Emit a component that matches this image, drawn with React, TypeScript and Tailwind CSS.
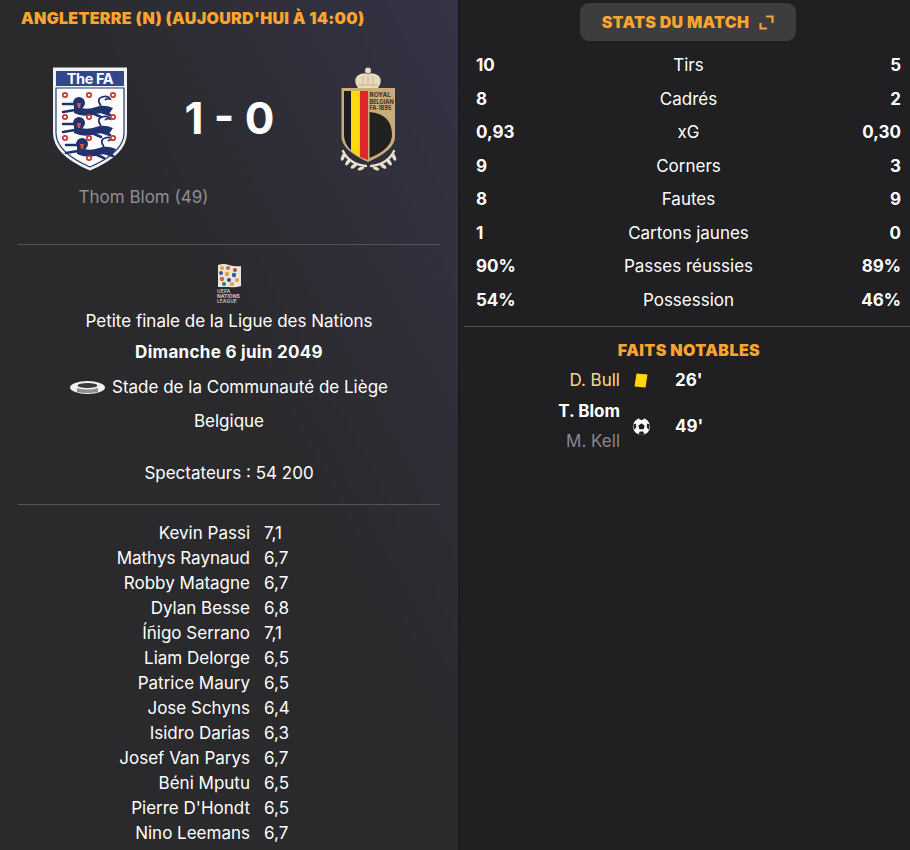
import React from 'react';

const stats = [
  { left: '10', label: 'Tirs', right: '5' },
  { left: '8', label: 'Cadrés', right: '2' },
  { left: '0,93', label: 'xG', right: '0,30' },
  { left: '9', label: 'Corners', right: '3' },
  { left: '8', label: 'Fautes', right: '9' },
  { left: '1', label: 'Cartons jaunes', right: '0' },
  { left: '90%', label: 'Passes réussies', right: '89%' },
  { left: '54%', label: 'Possession', right: '46%' },
];

const players = [
  ['Kevin Passi', '7,1'],
  ['Mathys Raynaud', '6,7'],
  ['Robby Matagne', '6,7'],
  ['Dylan Besse', '6,8'],
  ['Íñigo Serrano', '7,1'],
  ['Liam Delorge', '6,5'],
  ['Patrice Maury', '6,5'],
  ['Jose Schyns', '6,4'],
  ['Isidro Darias', '6,3'],
  ['Josef Van Parys', '6,7'],
  ['Béni Mputu', '6,5'],
  ["Pierre D'Hondt", '6,5'],
  ['Nino Leemans', '6,7'],
];

function Lion({ x, y }: { x: number; y: number }) {
  return (
    <g transform={`translate(${x} ${y})`}>
      <path d="M22 12 Q34 17 44 13 Q52 10 61 14 L57 20 Q47 18 40 21 Q30 23 22 19 Z" fill="#22326e" />
      <path d="M23 10 L11 10 M23 16 L11 18 M47 17 L58 21 M40 19 L49 23" stroke="#22326e" strokeWidth="2.6" strokeLinecap="round" fill="none" />
      <path d="M49 12 Q44 5 50 3 Q56 1 58 5 Q55 4 53 6" stroke="#22326e" strokeWidth="1.8" fill="none" />
      <circle cx="27" cy="9" r="6" fill="#22326e" />
      <path d="M25 9 h4 l-1 5 h-2 z" fill="#d9553a" />
    </g>
  );
}

function Rose({ x, y }: { x: number; y: number }) {
  return <circle cx={x} cy={y} r="2.2" fill="#fff" stroke="#c8352b" strokeWidth="1.7" />;
}

function FaCrest() {
  return (
    <svg width="76" height="104" viewBox="0 0 76 104" className="shrink-0">
      <path d="M1 0.5 H75 V66 Q75 88 38 103.5 Q1 88 1 66 Z" fill="#f2f2f2" />
      <rect x="4" y="4" width="68" height="15" fill="#32488a" />
      <text x="38" y="16.5" textAnchor="middle" fill="#fff" fontSize="14.5" fontWeight="700" letterSpacing="-0.4" fontFamily="Inter, sans-serif">The FA</text>
      <path d="M4 21 H72 V66 Q72 85 38 100 Q4 85 4 66 Z" fill="#fff" stroke="#233672" strokeWidth="1.2" />
      <Lion x={0} y={27} />
      <Lion x={0} y={47} />
      <Lion x={3} y={68} />
      <Rose x={13} y={28} />
      <Rose x={37} y={28} />
      <Rose x={61} y={28} />
      <Rose x={13} y={50} />
      <Rose x={37} y={50} />
      <Rose x={61} y={50} />
      <Rose x={13} y={71} />
      <Rose x={37} y={71} />
      <Rose x={61} y={71} />
      <Rose x={37} y={91} />
    </svg>
  );
}

function BelgiumCrest() {
  return (
    <svg width="58" height="104" viewBox="0 0 58 104" className="shrink-0">
      <circle cx="28" cy="3.5" r="3" fill="#e8dcc0" />
      <path d="M18 21 Q13 14 17 9 Q22 5 28 7 Q34 5 39 9 Q43 14 38 21 Z" fill="#e6d9bc" />
      <path d="M18 18 H38 M23 9 V18 M28 8 V18 M33 9 V18" stroke="#c0ac85" strokeWidth="0.8" fill="none" />
      <path d="M1.5 21 H55 V70 Q55 83 28 95 Q1.5 83 1.5 70 Z" fill="#c8ad78" />
      <path d="M4 24 H11 V83 Q4 77 4 68 Z" fill="#1c1c1c" />
      <path d="M11 24 H20 V90 Q14 87 11 83 Z" fill="#ffd90c" />
      <path d="M20 24 H28 V93 L20 90 Z" fill="#e0252b" />
      <path d="M29.5 45 Q52 47 52 68 Q52 82 29.5 91 Z" fill="#202020" />
      <text x="29.5" y="30" fontSize="6.4" fontWeight="700" fill="#3a2f1b" fontFamily="Inter, sans-serif">ROYAL</text>
      <text x="29.5" y="36.5" fontSize="5.6" fontWeight="700" fill="#3a2f1b" fontFamily="Inter, sans-serif">BELGIAN</text>
      <text x="29.5" y="43" fontSize="5.6" fontWeight="700" fill="#3a2f1b" fontFamily="Inter, sans-serif">FA·1895</text>
      <path d="M3 84 Q9 97 26 99 M54 84 Q48 97 31 99" stroke="#e9e0cc" strokeWidth="2.4" fill="none" strokeLinecap="round" />
      <g fill="#e9e0cc">
        <ellipse cx="3" cy="90" rx="1.8" ry="4" transform="rotate(20 3 90)" />
        <ellipse cx="8" cy="95" rx="1.8" ry="4" transform="rotate(35 8 95)" />
        <ellipse cx="14" cy="99" rx="1.7" ry="3.8" transform="rotate(55 14 99)" />
        <ellipse cx="21" cy="101.5" rx="1.5" ry="3.4" transform="rotate(70 21 101.5)" />
        <ellipse cx="54" cy="90" rx="1.8" ry="4" transform="rotate(-20 54 90)" />
        <ellipse cx="49" cy="95" rx="1.8" ry="4" transform="rotate(-35 49 95)" />
        <ellipse cx="43" cy="99" rx="1.7" ry="3.8" transform="rotate(-55 43 99)" />
        <ellipse cx="36" cy="101.5" rx="1.5" ry="3.4" transform="rotate(-70 36 101.5)" />
      </g>
    </svg>
  );
}

function NationsLeagueLogo() {
  return (
    <svg width="26" height="40" viewBox="0 0 26 40" className="shrink-0">
      <path d="M2 2 Q8 0 13 2 Q19 4 25 3 V23 Q19 25 13 24 L2 24 Z" fill="#e9e6dc" />
      <circle cx="6" cy="5" r="2" fill="#e0a042" />
      <circle cx="12" cy="5" r="2" fill="#d8643c" />
      <circle cx="19" cy="7" r="2" fill="#b54a3c" />
      <circle cx="5" cy="10" r="2" fill="#2f5aa0" />
      <circle cx="11" cy="11" r="2.2" fill="#e0a042" />
      <circle cx="18" cy="12" r="2.2" fill="#2f5aa0" />
      <circle cx="6" cy="16" r="2.2" fill="#d8643c" />
      <circle cx="13" cy="17" r="2" fill="#2d4a8a" />
      <circle cx="21" cy="17" r="2" fill="#e0a042" />
      <circle cx="8" cy="21" r="2" fill="#2d7a6a" />
      <circle cx="16" cy="21" r="2" fill="#d8a03c" />
      <text x="1" y="30" fontSize="5.2" fontWeight="700" fill="#b5b5b5" fontFamily="Inter, sans-serif">UEFA</text>
      <text x="1" y="35" fontSize="5" fontWeight="700" fill="#c8c8c8" fontFamily="Inter, sans-serif">NATIONS</text>
      <text x="1" y="40" fontSize="5" fontWeight="700" fill="#b5b5b5" fontFamily="Inter, sans-serif">LEAGUE</text>
    </svg>
  );
}

function StadiumIcon() {
  return (
    <svg width="35" height="15" viewBox="0 0 35 15" className="shrink-0">
      <ellipse cx="17.5" cy="7.5" rx="17.5" ry="6.5" fill="#f1f1f1" />
      <ellipse cx="17.5" cy="5.5" rx="10" ry="2.6" fill="#3a3a3d" />
      <path d="M7 8 Q17 11 28 8 L28 12 Q17 14 7 12 Z" fill="#8d8d8d" />
    </svg>
  );
}

function CardIcon() {
  return (
    <svg width="14" height="15" viewBox="0 0 14 15" className="shrink-0">
      <path d="M2.5 0.5 L13.5 1.5 L11.5 14.5 L0.5 13.5 Z" fill="#ffd60a" />
    </svg>
  );
}

function BallIcon() {
  return (
    <svg width="17" height="17" viewBox="0 0 16 16" className="shrink-0">
      <circle cx="8" cy="8" r="8" fill="#fff" />
      <path d="M8 5 L11 7.2 L10 10.6 H6 L5 7.2 Z" fill="#1f1e21" />
      <path d="M5 0.6 L8 2 L11 0.6 L9.5 0 H6.5 Z M0.3 6 L2.8 5.2 L3 9 L1 11 Z M15.7 6 L13.2 5.2 L13 9 L15 11 Z M5 15.4 L6.5 12.8 H9.5 L11 15.4 L8 16 Z" fill="#1f1e21" />
    </svg>
  );
}

function ExpandIcon() {
  return (
    <svg width="15" height="15" viewBox="0 0 15 15" fill="none" stroke="#f9a52f" strokeWidth="2.2" className="shrink-0">
      <path d="M1.5 8 V13.5 H8" />
      <path d="M7 1.5 H13.5 V8" />
    </svg>
  );
}

export default function App() {
  return (
    <div
      className="flex h-[850px] w-[910px] overflow-hidden bg-[#1b1a1c] text-white"
      style={{ fontFamily: 'Inter, sans-serif' }}
    >
      {/* Left panel */}
      <div className="flex h-full w-[458px] shrink-0 flex-col overflow-hidden bg-gradient-to-tr from-[#2a2a2d] from-55% to-[#353346] px-[18px]">
        <div className="mt-[9px] h-[18px] pl-[3px] text-[16px] leading-[18px] font-black tracking-[0.3px] whitespace-nowrap text-[#f9a52f]">
          ANGLETERRE (N) (AUJOURD'HUI À 14:00)
        </div>

        <div className="mt-[40px] flex h-[104px] items-center">
          <div className="ml-[34px]">
            <FaCrest />
          </div>
          <div className="ml-[56px] w-[91px] pb-[2px] text-center text-[44px] leading-none font-bold whitespace-nowrap">
            1 - 0
          </div>
          <div className="ml-[65px]">
            <BelgiumCrest />
          </div>
        </div>

        <div className="mt-[15px] w-[251px] text-center text-[17px] leading-[22px] text-[#8f8f91]">
          Thom Blom (49)
        </div>

        <div className="mt-[36px] h-px bg-[#535355]" />

        <div className="flex flex-col items-center text-[17px]">
          <div className="mt-[18px] h-[41px]">
            <NationsLeagueLogo />
          </div>
          <div className="mt-[6px] leading-[22px]">Petite finale de la Ligue des Nations</div>
          <div className="mt-[9px] leading-[22px] font-bold tracking-[0.3px]">Dimanche 6 juin 2049</div>
          <div className="mt-[13px] flex items-center gap-[7px] leading-[22px]">
            <StadiumIcon />
            Stade de la Communauté de Liège
          </div>
          <div className="mt-[12px] leading-[22px]">Belgique</div>
          <div className="mt-[30px] leading-[22px]">Spectateurs : 54 200</div>
        </div>

        <div className="mt-[20px] h-px bg-[#535355]" />

        <div className="mt-[16px] flex flex-col">
          {players.map(([name, rating]) => (
            <div key={name} className="flex h-[25px] items-center text-[17px]">
              <div className="w-[232px] text-right">{name}</div>
              <div className="ml-[14px]">{rating}</div>
            </div>
          ))}
        </div>
      </div>

      {/* Right panel */}
      <div className="ml-[2px] flex h-full flex-1 flex-col bg-[#201f22]">
        <div className="mt-[3px] flex justify-center pl-[6px]">
          <button className="flex h-[38px] w-[216px] items-center justify-center gap-[10px] rounded-[9px] bg-[#3d3c3e]">
            <span className="text-[16px] font-black tracking-[0.3px] text-[#f9a52f]">STATS DU MATCH</span>
            <ExpandIcon />
          </button>
        </div>

        <div className="mt-[8px] flex flex-col pr-[9px] pl-[16px]">
          {stats.map((s) => (
            <div key={s.label} className="flex h-[33.5px] items-center text-[17px]">
              <div className="w-[60px] font-bold">{s.left}</div>
              <div className="flex-1 text-center">{s.label}</div>
              <div className="w-[60px] text-right font-bold">{s.right}</div>
            </div>
          ))}
        </div>

        <div className="mt-[9px] ml-[4px] h-px bg-[#535355]" />

        <div className="mt-[14px] pl-[8px] text-center text-[16px] leading-[18px] font-black tracking-[0.4px] text-[#f9a52f]">
          FAITS NOTABLES
        </div>

        <div className="mt-[9px] flex items-center">
          <div className="w-[160px] text-right text-[17px] leading-[24px] text-[#f6d98f]">D. Bull</div>
          <div className="ml-[14px] w-[41px]">
            <CardIcon />
          </div>
          <div className="text-[17px] leading-[24px] font-bold">26'</div>
        </div>

        <div className="mt-[4px] flex items-center">
          <div className="w-[160px] text-right text-[17px] leading-[30px]">
            <div className="font-bold">T. Blom</div>
            <div className="text-[#88888a]">M. Kell</div>
          </div>
          <div className="ml-[13px] w-[42px]">
            <BallIcon />
          </div>
          <div className="text-[17px] leading-[24px] font-bold">49'</div>
        </div>
      </div>
    </div>
  );
}
